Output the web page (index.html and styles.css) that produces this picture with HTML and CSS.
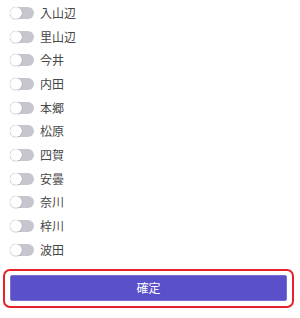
FILE: index.html
```html
<!DOCTYPE html>
<html lang="ja">
<head>
<meta charset="utf-8">
<link rel="stylesheet" href="styles.css">
</head>
<body>
<ul class="list">
  <li class="row"><span class="toggle"><span class="knob"></span></span><span class="label">入山辺</span></li>
  <li class="row"><span class="toggle"><span class="knob"></span></span><span class="label">里山辺</span></li>
  <li class="row"><span class="toggle"><span class="knob"></span></span><span class="label">今井</span></li>
  <li class="row"><span class="toggle"><span class="knob"></span></span><span class="label">内田</span></li>
  <li class="row"><span class="toggle"><span class="knob"></span></span><span class="label">本郷</span></li>
  <li class="row"><span class="toggle"><span class="knob"></span></span><span class="label">松原</span></li>
  <li class="row"><span class="toggle"><span class="knob"></span></span><span class="label">四賀</span></li>
  <li class="row"><span class="toggle"><span class="knob"></span></span><span class="label">安曇</span></li>
  <li class="row"><span class="toggle"><span class="knob"></span></span><span class="label">奈川</span></li>
  <li class="row"><span class="toggle"><span class="knob"></span></span><span class="label">梓川</span></li>
  <li class="row"><span class="toggle"><span class="knob"></span></span><span class="label">波田</span></li>
</ul>
<div class="focus-ring">
  <button class="confirm">確定</button>
</div>
</body>
</html>
```
FILE: styles.css
```css
html, body {
  margin: 0;
  padding: 0;
  background: #ffffff;
}
body {
  width: 300px;
  height: 318px;
  overflow: hidden;
  font-family: "Noto Sans CJK JP", "Noto Sans", sans-serif;
  color: #474747;
}
.list {
  list-style: none;
  margin: 0;
  padding: 1px 0 0 10px;
}
.row {
  display: flex;
  align-items: center;
  gap: 6px;
  height: 23.7px;
}
.toggle {
  position: relative;
  display: block;
  width: 24px;
  height: 12px;
  border-radius: 6px;
  background: #c6c6d1;
  flex: none;
}
.knob {
  position: absolute;
  left: 0;
  top: 0;
  width: 12px;
  height: 12px;
  border-radius: 50%;
  background: #ffffff;
  box-shadow: 0 0 1px rgba(0, 0, 0, 0.35), 0 1px 1px rgba(0, 0, 0, 0.08);
}
.label {
  font-size: 12px;
  line-height: 1;
}
.focus-ring {
  box-sizing: border-box;
  width: 291px;
  margin: 7px 0 0 3px;
  padding: 4px 5px 5px;
  border: 2px solid #e5222b;
  border-radius: 7px;
}
.confirm {
  display: block;
  width: 100%;
  height: 26px;
  margin: 0;
  padding: 0;
  border: 1px solid #7a71d6;
  border-radius: 2px;
  background: #5a50c9;
  color: #ffffff;
  font-family: "Noto Sans CJK JP", "Noto Sans", sans-serif;
  font-size: 12px;
}
```
